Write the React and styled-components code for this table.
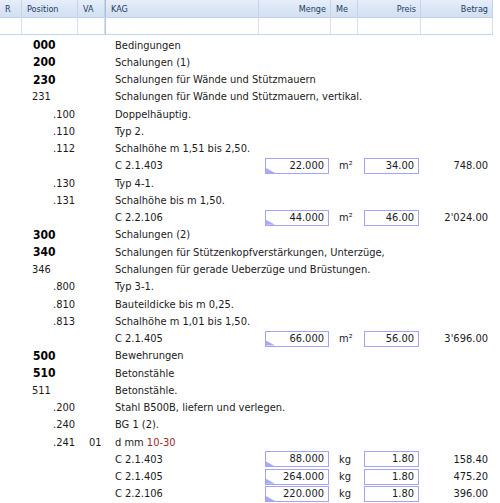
import React from "react";
import styled, { createGlobalStyle } from "styled-components";

const GlobalStyle = createGlobalStyle`
  html, body { margin: 0; padding: 0; background: #ffffff; }
  body { font-family: "DejaVu Sans Condensed", "DejaVu Sans", sans-serif; }
`;

const COLS = "22px 56px 27px 154px 72px 27px 63px 72px";

const Table = styled.div`
  width: 493px;
  display: flex;
  flex-direction: column;
`;

const HeaderRow = styled.div`
  display: grid;
  grid-template-columns: ${COLS};
  height: 17px;
  background: linear-gradient(#e6eef9, #d9e5f5 60%, #d2e0f2);
  border-bottom: 1px solid #c3d4ea;
  color: #1f3b63;
  font-size: 9px;
`;

const HeaderCell = styled.div`
  display: flex;
  align-items: center;
  justify-content: ${(p) => (p.$right ? "flex-end" : "flex-start")};
  padding: ${(p) => (p.$right ? "0 4px 0 0" : "0 0 0 5px")};
  border-right: 1px solid #c2d3ea;
  border-left: ${(p) => (p.$sep ? "1px solid #a9bfdc" : "none")};
  white-space: nowrap;
  overflow: hidden;
`;

const FilterRow = styled.div`
  display: grid;
  grid-template-columns: ${COLS};
  height: 16px;
  background: #ffffff;
  border-bottom: 1px solid #c6d5ea;
`;

const FilterCell = styled.div`
  border-right: 1px solid #d4e0ef;
  border-left: ${(p) => (p.$sep ? "1px solid #b4c7e0" : "none")};
`;

const Body = styled.div`
  padding-top: 1.4px;
  display: flex;
  flex-direction: column;
`;

const Row = styled.div`
  display: grid;
  grid-template-columns: ${COLS};
  height: 17.27px;
  align-items: center;
  font-size: 11px;
  color: #1b1b1b;
  white-space: nowrap;
`;

const PosCell = styled.div`
  grid-column: 2;
  padding-left: ${(p) => (p.$level === "s" ? 31 : p.$level === "b" ? 11 : 10)}px;
  font-size: ${(p) => (p.$level === "b" ? 12 : 11)}px;
  font-weight: ${(p) => (p.$level === "b" ? 700 : 400)};
  color: ${(p) => (p.$level === "b" ? "#000" : "#1b1b1b")};
`;

const VaCell = styled.div`
  grid-column: 3;
  padding-left: 11px;
`;

const KagCell = styled.div`
  grid-column: 4 / span 4;
  padding-left: 10px;
`;

const CodeCell = styled.div`
  grid-column: 4;
  padding-left: 10px;
`;

const Red = styled.span`
  color: #a3262c;
`;

const BoxCell = styled.div`
  padding: 0 2px 0 6px;
  display: flex;
`;

const NumBox = styled.div`
  position: relative;
  flex: 1;
  height: 14px;
  border: 1px solid #a3a3f7;
  background: #ffffff;
  text-align: right;
  padding-right: 4px;
  line-height: 14px;
  &::before {
    content: "";
    display: ${(p) => (p.$flag ? "block" : "none")};
    position: absolute;
    left: 0;
    bottom: 0;
    width: 9px;
    height: 5px;
    background: #aaaaef;
    clip-path: polygon(0 0, 0 100%, 100% 100%);
  }
`;

const MeCell = styled.div`
  padding-left: 8px;
`;

const BetragCell = styled.div`
  text-align: right;
  padding-right: 5px;
`;

const columns = [
  { label: "R" },
  { label: "Position" },
  { label: "VA" },
  { label: "KAG", sep: true },
  { label: "Menge", right: true },
  { label: "Me" },
  { label: "Preis", right: true },
  { label: "Betrag", right: true },
];

const rows = [
  { pos: "000", lvl: "b", kag: "Bedingungen" },
  { pos: "200", lvl: "b", kag: "Schalungen (1)" },
  { pos: "230", lvl: "b", kag: "Schalungen für Wände und Stützmauern" },
  { pos: "231", lvl: "n", kag: "Schalungen für Wände und Stützmauern, vertikal." },
  { pos: ".100", lvl: "s", kag: "Doppelhäuptig." },
  { pos: ".110", lvl: "s", kag: "Typ 2." },
  { pos: ".112", lvl: "s", kag: "Schalhöhe m 1,51 bis 2,50." },
  { code: "C 2.1.403", menge: "22.000", me: "m²", preis: "34.00", betrag: "748.00" },
  { pos: ".130", lvl: "s", kag: "Typ 4-1." },
  { pos: ".131", lvl: "s", kag: "Schalhöhe bis m 1,50." },
  { code: "C 2.2.106", menge: "44.000", me: "m²", preis: "46.00", betrag: "2'024.00" },
  { pos: "300", lvl: "b", kag: "Schalungen (2)" },
  { pos: "340", lvl: "b", kag: "Schalungen für Stützenkopfverstärkungen, Unterzüge," },
  { pos: "346", lvl: "n", kag: "Schalungen für gerade Ueberzüge und Brüstungen." },
  { pos: ".800", lvl: "s", kag: "Typ 3-1." },
  { pos: ".810", lvl: "s", kag: "Bauteildicke bis m 0,25." },
  { pos: ".813", lvl: "s", kag: "Schalhöhe m 1,01 bis 1,50." },
  { code: "C 2.1.405", menge: "66.000", me: "m²", preis: "56.00", betrag: "3'696.00" },
  { pos: "500", lvl: "b", kag: "Bewehrungen" },
  { pos: "510", lvl: "b", kag: "Betonstähle" },
  { pos: "511", lvl: "n", kag: "Betonstähle." },
  { pos: ".200", lvl: "s", kag: "Stahl B500B, liefern und verlegen." },
  { pos: ".240", lvl: "s", kag: "BG 1 (2)." },
  { pos: ".241", lvl: "s", va: "01", kag: "d mm ", red: "10-30" },
  { code: "C 2.1.403", menge: "88.000", me: "kg", preis: "1.80", betrag: "158.40" },
  { code: "C 2.1.405", menge: "264.000", me: "kg", preis: "1.80", betrag: "475.20" },
  { code: "C 2.2.106", menge: "220.000", me: "kg", preis: "1.80", betrag: "396.00" },
];

function DataRow({ r }) {
  if (r.code) {
    return (
      <Row>
        <CodeCell>{r.code}</CodeCell>
        <BoxCell>
          <NumBox $flag>{r.menge}</NumBox>
        </BoxCell>
        <MeCell>{r.me}</MeCell>
        <BoxCell>
          <NumBox>{r.preis}</NumBox>
        </BoxCell>
        <BetragCell>{r.betrag}</BetragCell>
      </Row>
    );
  }
  return (
    <Row>
      <PosCell $level={r.lvl}>{r.pos}</PosCell>
      <VaCell>{r.va}</VaCell>
      <KagCell>
        {r.kag}
        {r.red && <Red>{r.red}</Red>}
      </KagCell>
    </Row>
  );
}

export default function App() {
  return (
    <>
      <GlobalStyle />
      <Table>
        <HeaderRow>
          {columns.map((c) => (
            <HeaderCell key={c.label} $right={c.right} $sep={c.sep}>
              {c.label}
            </HeaderCell>
          ))}
        </HeaderRow>
        <FilterRow>
          {columns.map((c) => (
            <FilterCell key={c.label} $sep={c.sep} />
          ))}
        </FilterRow>
        <Body>
          {rows.map((r, i) => (
            <DataRow key={i} r={r} />
          ))}
        </Body>
      </Table>
    </>
  );
}
